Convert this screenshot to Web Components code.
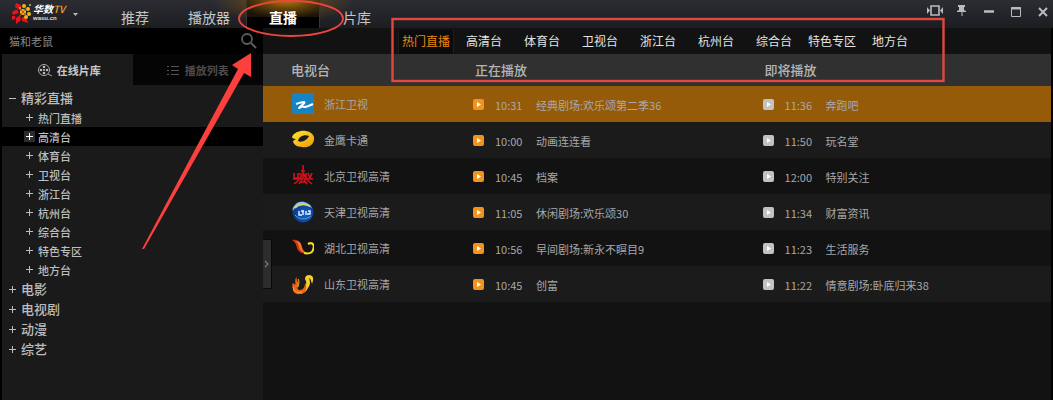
<!DOCTYPE html>
<html lang="zh-CN">
<head>
  <meta charset="utf-8">
  <meta name="viewport" content="width=device-width, initial-scale=1">
  <title>华数TV</title>
  <style>
    body {
      margin: 0;
      background: #000;
      color: #a8a8a8;
      font: 11px/18px "Noto Sans CJK SC", "Liberation Sans", sans-serif;
    }
  </style>
</head>
<body>
  <tv-app>
    <tv-titlebar slot="top"></tv-titlebar>
    <tv-sidebar slot="side"></tv-sidebar>
    <tv-categories slot="main"></tv-categories>
    <tv-schedule slot="main"></tv-schedule>
    <tv-marks slot="marks"></tv-marks>
  </tv-app>

  <script>
    (() => {
      const define = (name, html) => {
        customElements.define(name, class extends HTMLElement {
          constructor() {
            super();
            this.attachShadow({ mode: "open" });
            this.shadowRoot.innerHTML = html;
          }
        });
      };

      const reset = /* html */ `
        <style>
          * { box-sizing: border-box; }
          button, input {
            margin: 0;
            padding: 0;
            border: 0;
            background: none;
            color: inherit;
            font: inherit;
          }
          button { cursor: pointer; }
          a { color: inherit; text-decoration: none; }
          ul { margin: 0; padding: 0; list-style: none; }
          svg { display: block; }
        </style>
      `;

      // Channel logos, all on a 22x22 grid
      const logos = {
        zhejiang: `
          <rect width="22" height="21" fill="#1583c4"/>
          <path d="M4 11c3-1 6-2 8-2 2 1-3 3-5 6 2-1 4-2 5-1 3 0 5-1 9-3" fill="none" stroke="#fff" stroke-width="2" stroke-linejoin="round"/>`,
        jinying: `
          <defs><linearGradient id="gold" x2="1" y2="1"><stop stop-color="#ffe62e"/><stop offset="1" stop-color="#f09a08"/></linearGradient></defs>
          <path d="M0 8C2 3 9 1 14 2c6 1 9 5 8 9-1 6-7 8-12 7-5 0-9-3-9-6l3-2C2 10 0 9 0 8Zm6 4c4 2 9-1 11-5-4-2-10 0-11 5Z" fill="url(#gold)" fill-rule="evenodd"/>`,
        beijing: `
          <g fill="none" stroke="#d3121c" stroke-width="1.6">
            <path d="M11 0v7M9 6h4M2 8v5h4V8M6 9h3v4H6M11 13V8l3 5V8M16 8l2 5 2-5M1 14h20M2 19l5-4M7 19l3-4M15 19l-3-4M20 19l-5-4M9 17h4"/>
          </g>`,
        tianjin: `
          <defs><radialGradient id="globe" cx=".6" cy=".6"><stop stop-color="#1c62c8"/><stop offset="1" stop-color="#0a3d96"/></radialGradient></defs>
          <circle cx="11" cy="11" r="10.5" fill="url(#globe)"/>
          <path d="M1 10C3 4 11 2 20 7 17 1 7-2 3 4 1 6 0 8 1 10Z" fill="#8bc7df"/>
          <path d="M3 7c4-4 10-5 15-2" fill="none" stroke="#ddd36a" stroke-width="1.6"/>
          <path d="M7 10v4h3M9 10h3M11 10v4M14 10v4M16 10h2v3h-3" fill="none" stroke="#e8f4ff" stroke-width="1.4"/>
          <path d="M3 14c4 5 11 5 16 1" fill="none" stroke="#4ba6e2"/>`,
        hubei: `
          <path d="M0 3c6-1 9 2 10 7 1 4 3 5 5 6-5 1-9-1-10-5C4 7 3 5 0 3Z" fill="#c9330f"/>
          <path d="M3 4c6 0 6 3 7 7 1 3 3 4 5 5-4 0-7-2-8-6S5 5 3 4Z" fill="#f0752a"/>
          <path d="M16 7c5-3 7 2 5 6-1 3-5 4-9 3" fill="none" stroke="#f0dc1c" stroke-width="2.2"/>`,
        shandong: `
          <path d="M14 8c-3-4 2-8 6-5 2 2 1 5 0 8-1-3-1-5-3-6 1 3 2 6-1 10-2 4-5 6-9 6 5-3 8-8 7-13Z" fill="#f7cf28"/>
          <path d="M5 4c-2 3 3 5 1 9-1 3 0 4 2 4 3 0 5-3 5-7 3 4 1 11-5 11-5 1-8-3-7-6-1-2-1-3 0-5l2 2C4 9 2 6 5 4Z" fill="#ee6217"/>
          <path d="M1 14c1 5 5 6 9 5M6 6c2 3 0 5 0 8" fill="none" stroke="#f9b423"/>`
      };

      define("tv-app", /* html */ `
        ${reset}
        <style>
          :host {
            display: flex;
            flex-direction: column;
            position: relative;
            min-height: 100vh;
            overflow: hidden;
          }
          .body {
            display: flex;
            flex: 1;
            padding: 0 2px;
          }
          main {
            position: relative;
            flex: 1;
            min-width: 0;
            background: #121212;
          }
          .collapse {
            position: absolute;
            left: 0;
            top: 211px;
            width: 9px;
            height: 50px;
            border: 1px solid #0a0a0a;
            border-left: 0;
            border-radius: 0 2px 2px 0;
            background: #2d2d2d;
          }
        </style>
        <slot name="top"></slot>
        <div class="body">
          <slot name="side"></slot>
          <main>
            <slot name="main"></slot>
            <button class="collapse" aria-label="收起侧栏">
              <svg width="8" height="10" fill="none" stroke="#777" stroke-width="1.3"><path d="M2 2l3 3-3 3"/></svg>
            </button>
          </main>
        </div>
        <slot name="marks"></slot>
      `);

      define("tv-titlebar", /* html */ `
        ${reset}
        <style>
          :host {
            display: block;
            background: linear-gradient(#2c2d33, #1c1d21);
            color: #c6c6c6;
          }
          header {
            display: flex;
            height: 28px;
          }
          .logo {
            display: flex;
            align-items: flex-start;
            width: 98px;
            padding: 2px 0 0 11px;
          }
          .name {
            display: grid;
            margin-left: 1px;
            font-style: italic;
            font-weight: 700;
          }
          .name span { color: #fff; font-size: 10px; line-height: 13px; }
          .name em { color: #f0a21c; font-weight: 500; }
          .name small {
            color: #ddd;
            font: 700 6px/6px "Liberation Sans", sans-serif;
          }
          .menu { margin: 10px 0 0 8px; }
          nav {
            display: flex;
            isolation: isolate;
          }
          nav a {
            display: grid;
            place-items: center;
            position: relative;
            width: 74px;
            padding-top: 6px;
            font-size: 14px;
            line-height: 20px;
          }
          nav a[aria-current] {
            background:
              linear-gradient(#0000 60%, #000 60%),
              radial-gradient(ellipse 50px 18px at 55% 0, #b87a10, #6a460a 45%, #1a140a);
            color: #fff;
            font-weight: 700;
            border: solid #3b3427;
            border-width: 0 1px;
          }
          /* Light that spills past the sides of the current tab */
          nav a[aria-current]::before {
            content: "";
            position: absolute;
            inset: 0 -34px;
            z-index: -1;
            background: radial-gradient(ellipse 70px 24px at 50% 0, #7a5210, #7a521000);
          }
          .window {
            display: flex;
            align-items: flex-start;
            gap: 9px;
            margin-left: auto;
            padding: 2px 1px 0 0;
          }
          .window button { width: 18px; height: 18px; }
        </style>
        <header>
          <div class="logo">
            <svg width="21" height="22">
              <g fill="#e3161b">
                <path d="M5 1l5 2-1 5-5-3zM1 10l5-3 2 4-6 2zM5 16l4-3 1 5-5 4zM11 15l4 0 2 6-6-2zM1 14l3 0 0 3-3 1z"/>
              </g>
              <g fill="#f4b51b">
                <circle cx="12" cy="10" r="3"/><circle cx="13" cy="4" r="2"/><circle cx="17" cy="7" r="2"/>
                <circle cx="18" cy="12" r="2"/><circle cx="15" cy="15" r="2"/><circle cx="9" cy="6" r="1"/><circle cx="19" cy="3" r="1"/>
              </g>
              <path d="M9 7l6 6M15 6l-6 8" stroke="#d4460e"/>
            </svg>
            <div class="name"><span>华数<em>TV</em></span><small>wasu.cn</small></div>
            <button class="menu" aria-label="菜单"><svg width="6" height="5" fill="#bbb"><path d="M0 1h5L2.500 4z"/></svg></button>
          </div>
          <nav>
            <a href="#home">推荐</a>
            <a href="#player">播放器</a>
            <a href="#live" aria-current="page">直播</a>
            <a href="#library">片库</a>
          </nav>
          <div class="window">
            <button aria-label="精简模式"><svg width="18" height="18" fill="none" stroke="#bbb" stroke-width="1.6"><path d="M5 4h8v9H5z"/><path d="M1 5v7l3-3.500zM17 5v7l-3-3.500z" fill="#bbb" stroke="none"/></svg></button>
            <button aria-label="置顶"><svg width="18" height="18" fill="#bbb"><path d="M5 3h7v2h-1v3l2 1v1H9.500v4h-1v-4H4V9l2-1V5H5z"/></svg></button>
            <button aria-label="最小化"><svg width="18" height="18"><path d="M4 9.500h10" stroke="#bbb" stroke-width="2.500"/></svg></button>
            <button aria-label="最大化"><svg width="18" height="18" fill="none" stroke="#bbb"><path d="M4.500 5.500h9v9h-9z"/><path d="M4 6.500h10" stroke-width="2"/></svg></button>
            <button aria-label="关闭"><svg width="18" height="18"><path d="M5 6l8 8M13 6l-8 8" stroke="#bbb" stroke-width="2"/></svg></button>
          </div>
        </header>
      `);

      define("tv-sidebar", /* html */ `
        ${reset}
        <style>
          :host {
            display: block;
            width: 261px;
            flex: none;
            background: #1a1a1a;
          }
          form {
            display: flex;
            align-items: center;
            height: 26px;
            padding: 0 5px 0 7px;
            background: #000;
          }
          input {
            flex: 1;
            min-width: 0;
            color: #858585;
            outline: 0;
          }
          .tabs {
            display: grid;
            grid-template-columns: 1fr 1fr;
            height: 31px;
          }
          .tabs button {
            display: flex;
            align-items: center;
            justify-content: center;
            gap: 4px;
            padding-left: 3px;
            color: #c8c8c8;
            font-weight: 700;
          }
          .tabs [aria-selected="false"] {
            gap: 6px;
            padding-left: 0;
            background: #050505;
            color: #4c4c4c;
          }
        </style>
        <form>
          <input type="text" value="猫和老鼠" aria-label="搜索">
          <button type="button" aria-label="开始搜索">
            <svg width="18" height="18" fill="none" stroke="#5c5c5c"><circle cx="7" cy="7" r="5" stroke-width="1.800"/><path d="M11 11l5 5" stroke-width="2"/></svg>
          </button>
        </form>
        <div class="tabs" role="tablist">
          <button role="tab" aria-selected="true">
            <svg width="16" height="14" fill="none" stroke="#aaa"><circle cx="7" cy="7" r="5.500"/><path d="M11 11l4 2"/><g fill="#bbb" stroke="none"><circle cx="7" cy="4" r="1.300"/><circle cx="7" cy="10" r="1.300"/><circle cx="4" cy="7" r="1.300"/><circle cx="10" cy="7" r="1.300"/><circle cx="7" cy="7" r="1"/></g></svg>
            在线片库
          </button>
          <button role="tab" aria-selected="false">
            <svg width="12" height="10" stroke="#555"><path d="M0 1.500h2M4 1.500h8M0 5.500h2M4 5.500h8M0 9.500h2M4 9.500h8"/></svg>
            播放列表
          </button>
        </div>
        <tv-tree></tv-tree>
      `);

      const tree = [
        ["精彩直播", ["热门直播", "高清台", "体育台", "卫视台", "浙江台", "杭州台", "综合台", "特色专区", "地方台"]],
        ["电影"],
        ["电视剧"],
        ["动漫"],
        ["综艺"]
      ];

      const sign = (open) => /* html */ `
        <svg width="11" height="11" stroke="currentColor"><path d="M2 5.500h7${open ? "" : "M5.500 2v7"}"/></svg>
      `;

      define("tv-tree", /* html */ `
        ${reset}
        <style>
          :host { display: block; padding-top: 3px; color: #bdbdbd; }
          button {
            display: flex;
            align-items: center;
            width: 100%;
            height: 20px;
            padding-left: 5px;
            gap: 3px;
            font-size: 13px;
            font-weight: 500;
            line-height: 18px;
          }
          li li button {
            height: 19px;
            padding-left: 22px;
            font-size: 11px;
          }
          [aria-current] { background: #000; }
          [aria-current] svg { background: #2c2c2c; color: #fff; }
        </style>
        <ul>
          ${tree.map(([title, items]) => `
            <li>
              <button aria-expanded="${!!items}">${sign(items)}${title}</button>
              ${items ? `<ul>${items.map((item) => `
                <li><button ${item === "高清台" ? 'aria-current="true"' : ""}>${sign(false)}${item}</button></li>
              `).join("")}</ul>` : ""}
            </li>
          `).join("")}
        </ul>
      `);

      const categories = ["热门直播", "高清台", "体育台", "卫视台", "浙江台", "杭州台", "综合台", "特色专区", "地方台"];

      define("tv-categories", /* html */ `
        ${reset}
        <style>
          :host { display: block; background: #121212; }
          nav {
            display: grid;
            grid-template-columns: repeat(9, 58px);
            height: 26px;
            padding-left: 134px;
            color: #e4e4e4;
            font-size: 12px;
            line-height: 22px;
            text-align: center;
          }
          a { height: 24px; margin: 2px 1px 0; white-space: nowrap; }
          a[aria-current] { background: #0b0b0b; color: #e8870f; border: solid #1e1e1e; border-width: 0 1px; }
        </style>
        <nav>
          ${categories.map((name, i) => `<a href="#c${i}" ${i ? "" : 'aria-current="page"'}>${name}</a>`).join("")}
        </nav>
      `);

      const channels = [
        ["zhejiang", "浙江卫视", "10:31", "经典剧场:欢乐颂第二季36", "11:36", "奔跑吧"],
        ["jinying", "金鹰卡通", "10:00", "动画连连看", "11:50", "玩名堂"],
        ["beijing", "北京卫视高清", "10:45", "档案", "12:00", "特别关注"],
        ["tianjin", "天津卫视高清", "11:05", "休闲剧场:欢乐颂30", "11:34", "财富资讯"],
        ["hubei", "湖北卫视高清", "10:56", "早间剧场:新永不瞑目9", "11:23", "生活服务"],
        ["shandong", "山东卫视高清", "10:45", "创富", "11:22", "情意剧场:卧底归来38"]
      ];

      const show = (time, title) => /* html */ `
        <div class="cell show">
          <button aria-label="播放"><svg width="11" height="11"><rect width="11" height="11" rx="2" fill="currentColor"/><path d="M4 3l4 2.500L4 8z" fill="#fff"/></svg></button>
          <time>${time}</time><span>${title}</span>
        </div>
      `;

      define("tv-schedule", /* html */ `
        ${reset}
        <style>
          :host { display: block; }
          table {
            width: 100%;
            table-layout: fixed;
            border-collapse: collapse;
          }
          th {
            height: 32px;
            padding: 0 0 0 15px;
            background: #303030;
            color: #b4b4b4;
            font-size: 13px;
            font-weight: 500;
            text-align: left;
          }
          td { height: 36px; padding: 0 0 0 13px; }
          th:nth-child(2) { width: 37%; }
          th:last-child { padding-left: 13px; }
          td:last-child { padding-left: 11px; }
          th:first-child { width: 25%; padding-left: 28px; }
          td:first-child { padding-left: 29px; }
          tr:nth-child(even) { background: #1b1b1b; }
          tr.active { background: #955b09; }
          .cell { display: flex; align-items: center; gap: 10px; white-space: nowrap; }
          .show { gap: 11px; }
          .show button { color: #f0941d; }
          td:last-child button { color: #c2c2c2; }
          time { width: 30px; padding-top: 2px; }
          span { padding-top: 2px; }
        </style>
        <table>
          <thead><tr><th>电视台</th><th>正在播放</th><th>即将播放</th></tr></thead>
          <tbody>
            ${channels.map(([logo, name, time, title, nextTime, nextTitle], i) => `
              <tr ${i ? "" : 'class="active"'}>
                <td><div class="cell"><svg width="22" height="22">${logos[logo]}</svg>${name}</div></td>
                <td>${show(time, title)}</td>
                <td>${show(nextTime, nextTitle)}</td>
              </tr>
            `).join("")}
          </tbody>
        </table>
      `);

      // Guide marks drawn over the window
      define("tv-marks", /* html */ `
        <style>
          :host {
            position: absolute;
            inset: 0;
            pointer-events: none;
          }
          svg { display: block; width: 100%; height: 100%; }
        </style>
        <svg fill="none" stroke="#e0483f" stroke-width="2.400">
          <ellipse cx="291" cy="18.500" rx="52" ry="17.500" stroke="#ee4440" stroke-width="1.800"/>
          <rect x="392.500" y="19" width="551" height="62"/>
          <path d="M251 53l-19 12 6 4L142 249l2 0L244 73l7 4z" fill="#fb403d" stroke="none"/>
        </svg>
      `);
    })();
  </script>
</body>
</html>
